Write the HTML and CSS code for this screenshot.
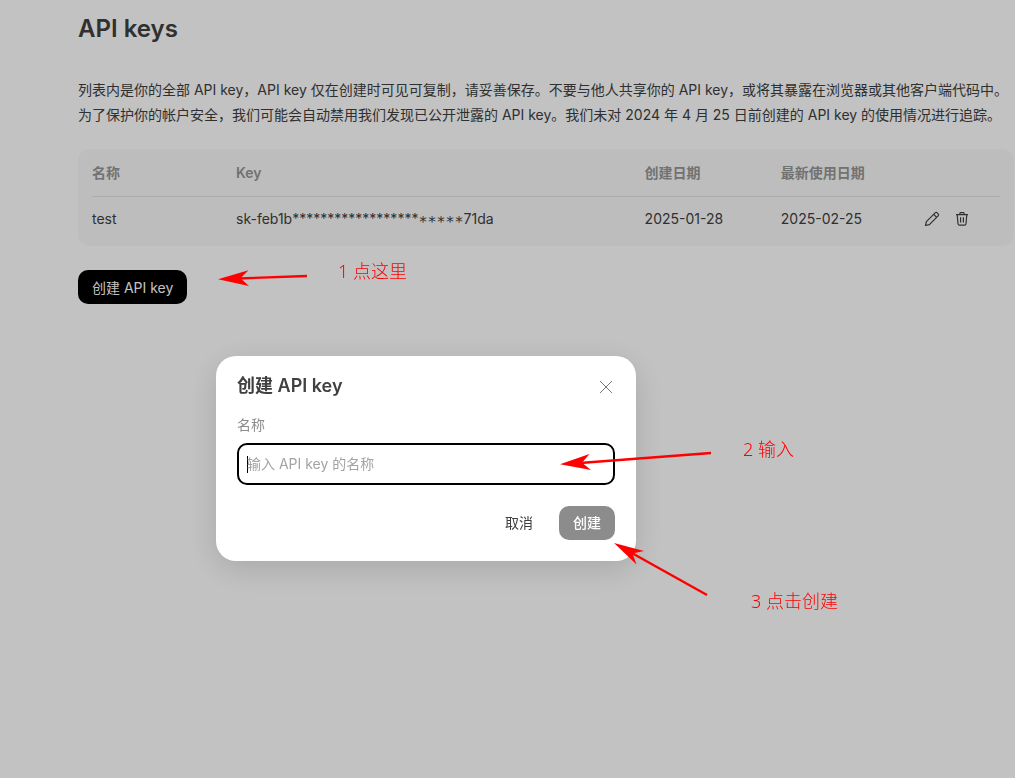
FILE: index.html
```html
<!DOCTYPE html>
<html lang="zh-CN">
<head>
  <meta charset="UTF-8" />
  <meta name="viewport" content="width=device-width, initial-scale=1.0" />
  <title>API keys</title>
  <link rel="stylesheet" href="styles.css">
</head>
<body>
  <main class="page">
    <h1>API keys</h1>
    <p class="intro">
      列表内是你的全部 API key，API key 仅在创建时可见可复制，请妥善保存。不要与他人共享你的 API key，或将其暴露在浏览器或其他客户端代码中。<br>
      为了保护你的帐户安全，我们可能会自动禁用我们发现已公开泄露的 API key。我们未对 2024 年 4 月 25 日前创建的 API key 的使用情况进行追踪。
    </p>

    <!-- Key list -->
    <div class="card">
      <table class="key-table">
        <thead>
          <tr>
            <th class="col-name">名称</th>
            <th class="col-key">Key</th>
            <th class="col-date">创建日期</th>
            <th class="col-date">最新使用日期</th>
            <th></th>
          </tr>
        </thead>
        <tbody>
          <tr>
            <td>test</td>
            <td>sk-feb1b******************<span class="stars">∗∗∗∗∗</span>71da</td>
            <td>2025-01-28</td>
            <td>2025-02-25</td>
            <td>
              <div class="actions">
                <button type="button" class="icon-button" aria-label="编辑">
                  <svg width="16" height="16" viewBox="0 0 16 16" fill="none" stroke="currentColor" stroke-width="1.2" stroke-linejoin="round">
                    <path d="M1.500 14.500l.9-3.900 8.700-8.700a1.500 1.500 0 0 1 2.100 0l.9.9a1.500 1.500 0 0 1 0 2.100l-8.700 8.700z" />
                    <path d="M9.700 3.300l3 3" />
                  </svg>
                </button>
                <button type="button" class="icon-button" aria-label="删除">
                  <svg width="16" height="16" viewBox="0 0 16 16" fill="none" stroke="currentColor" stroke-width="1.2" stroke-linejoin="round">
                    <path d="M2 3.600h12M5.600 3.400l.6-1.800h3.600l.6 1.800M3.200 3.800l.8 8.900a1.600 1.600 0 0 0 1.600 1.500h4.800a1.600 1.600 0 0 0 1.600-1.500l.8-8.900M6.600 6.200v5.400M9.400 6.200v5.400" />
                  </svg>
                </button>
              </div>
            </td>
          </tr>
        </tbody>
      </table>
    </div>

    <button type="button" class="button button-primary">创建 API key</button>
  </main>

  <div class="mask"></div>

  <!-- Create dialog -->
  <form class="modal" role="dialog" aria-labelledby="modal-title">
    <div class="modal-header">
      <h2 id="modal-title">创建 API key</h2>
      <button type="button" class="close" aria-label="关闭">
        <svg width="18" height="18" viewBox="0 0 18 18" fill="none" stroke="currentColor">
          <path d="M3 4l12 12M15 4L3 16" />
        </svg>
      </button>
    </div>
    <label for="key-name">名称</label>
    <input type="text" id="key-name" placeholder="输入 API key 的名称" autocomplete="off" autofocus />
    <div class="modal-footer">
      <button type="button" class="button button-text">取消</button>
      <button type="submit" class="button button-muted">创建</button>
    </div>
  </form>

  <!-- Step arrows and notes -->
  <svg class="arrows" width="1015" height="778" viewBox="0 0 1015 778" aria-hidden="true">
    <g stroke="#f00" stroke-width="2.4">
      <path d="M307 276L238 278.5" />
      <path d="M711 453L580 463" />
      <path d="M707 595L630 552" />
    </g>
    <g fill="#f00">
      <path d="M218 279.3L248.500 270.300L240.500 278.300L249 286z" />
      <path d="M560 464.300L589.500 454L582 462.700L591 470z" />
      <path d="M614 543L644 551L632.500 553.500L636.500 564.500z" />
    </g>
  </svg>
  <span class="note note-one">1 点这里</span>
  <span class="note note-two">2 输入</span>
  <span class="note note-three">3 点击创建</span>
</body>
</html>
```

FILE: styles.css
```css
* {
  box-sizing: border-box;
}
body {
  margin: 0;
  min-height: 100vh;
  background: #fff;
  color: #404040;
  font-family: Inter, "Noto Sans CJK SC", sans-serif;
  font-size: 14px;
  line-height: 20px;
}
button,
input {
  font: inherit;
}
.page {
  padding: 13px 1px 24px 78px;
}
h1 {
  margin: 0;
  font-size: 24px;
  line-height: 32px;
  font-weight: 600;
}
.intro {
  margin: 32px 0 22px;
  line-height: 25px;
  white-space: nowrap;
}

/* Key list */
.card {
  padding: 2px 14px 4px;
  background: #f9f9f9;
  border-radius: 12px;
}
.key-table {
  width: 100%;
  table-layout: fixed;
  border-collapse: collapse;
}
th,
td {
  height: 46px;
  padding: 0;
  text-align: left;
}
th {
  height: 45px;
  border-bottom: 1px solid #e1e1e1;
  color: #969696;
  font-weight: 600;
}
.col-name {
  width: 144px;
}
.col-key {
  width: 45%;
}
.col-date {
  width: 15%;
}
.stars {
  font-family: "DejaVu Sans Mono", monospace;
  font-size: 15px;
  line-height: 1;
}
.actions {
  display: flex;
  gap: 14px;
  justify-content: flex-end;
  padding-right: 30px;
}
.icon-button,
.close {
  display: flex;
  padding: 0;
  border: none;
  background: none;
  color: inherit;
  cursor: pointer;
}

/* Buttons */
.button {
  height: 34px;
  padding: 0 14px;
  border: none;
  border-radius: 10px;
  cursor: pointer;
}
.button-primary {
  margin-top: 24px;
  padding-top: 2px;
  background: #000;
  color: #fff;
}
.button-text {
  background: none;
  color: #404040;
}
.button-muted {
  background: #8c8c8c;
  color: #fff;
  font-weight: 500;
}

.mask {
  position: fixed;
  inset: 0;
  background: rgba(0, 0, 0, 0.24);
}

/* Create dialog */
.modal {
  position: fixed;
  top: 356px;
  left: 216px;
  width: 420px;
  padding: 18px 21px 21px;
  background: #fff;
  border-radius: 20px;
  box-shadow: 0 8px 32px rgba(0, 0, 0, 0.14);
}
.modal-header {
  display: flex;
  align-items: center;
  justify-content: space-between;
  margin-bottom: 17px;
}
.modal h2 {
  margin: 0;
  font-size: 18px;
  line-height: 24px;
  font-weight: 600;
}
.close {
  color: #777;
}
.modal label {
  display: block;
  margin-bottom: 8px;
  color: #8c8c8c;
}
.modal input {
  display: block;
  width: 100%;
  height: 42px;
  padding: 0 8px 2px;
  border: 2px solid #000;
  border-radius: 10px;
  outline: none;
  background: #fff;
  color: #404040;
}
/* text cursor of the empty field */
.modal input:placeholder-shown {
  background: linear-gradient(#000, #000) 8px center / 1px 17px no-repeat #fff;
  caret-color: transparent;
}
.modal input::placeholder {
  color: #a3a3a3;
}
.modal-footer {
  display: flex;
  gap: 12px;
  justify-content: flex-end;
  margin-top: 21px;
}

/* Step arrows and notes */
.arrows {
  position: absolute;
  top: 0;
  left: 0;
  pointer-events: none;
}
.note {
  position: absolute;
  color: #f00;
  font-family: "Noto Sans", "Noto Sans CJK SC", sans-serif;
  font-size: 18px;
  line-height: 24px;
  font-weight: 300;
}
.note-one {
  top: 259px;
  left: 338px;
}
.note-two {
  top: 437px;
  left: 743px;
}
.note-three {
  top: 589px;
  left: 751px;
}
```
